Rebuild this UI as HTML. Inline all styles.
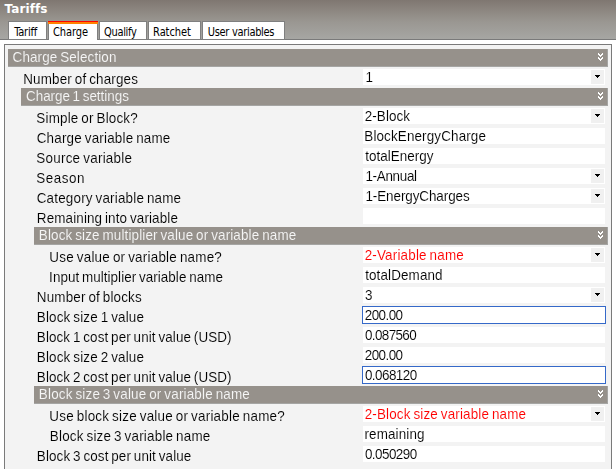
<!DOCTYPE html>
<html><head><meta charset="utf-8"><title>Tariffs</title>
<style>
html,body{margin:0;padding:0}
body{width:616px;height:469px;overflow:hidden;background:#fff;position:relative;font-family:"Liberation Sans",sans-serif;font-size:13px;color:#000}
#bg{position:absolute;left:0;top:0;width:616px;height:469px;display:block}
#title{position:absolute;left:4.5px;top:2px;font-family:"DejaVu Sans",sans-serif;font-weight:bold;font-size:12px;color:#fff;line-height:15px;letter-spacing:0.1px}
#tx{position:absolute;left:0;top:0;width:616px;height:469px;display:block;will-change:transform}
#tt{position:absolute;left:0;top:0;width:616px;height:44px;display:block}
text{white-space:pre}
.tb{font-family:"DejaVu Sans Condensed","Liberation Sans",sans-serif;font-size:11px;fill:#000}
.ht,.lb,.vl{font-family:"Liberation Sans",sans-serif;font-size:14px;stroke-width:0.1px}
.ht{fill:#f6f6f6;stroke:#96918b}
.vl{fill:#000;stroke:#fff}
.lb{fill:#000;stroke:#f3f3f3}
.red{fill:#f00}
</style></head><body>
<svg id="bg" width="616" height="469" viewBox="0 0 616 469">
<defs><linearGradient id="g" x1="0" y1="0" x2="0" y2="1"><stop offset="0" stop-color="#7f7771"/><stop offset="0.25" stop-color="#8c8680"/><stop offset="0.55" stop-color="#9a9792"/><stop offset="1" stop-color="#a7a7a4"/></linearGradient></defs>
<rect x="0" y="0" width="616" height="40" fill="url(#g)"/>
<rect x="0" y="39" width="616" height="1" fill="#7a7a7a"/>
<rect x="8" y="21" width="39" height="19" fill="#7f7f7f"/>
<rect x="9" y="22" width="37" height="17" fill="#fff"/>
<rect x="48" y="21" width="50" height="19" fill="#7f7f7f"/>
<rect x="49" y="21" width="48" height="21" fill="#fff"/>
<rect x="48" y="22" width="50" height="2" fill="#ff8200"/>
<rect x="48" y="21" width="50" height="1" fill="#fb0500"/>
<rect x="99" y="21" width="48" height="19" fill="#7f7f7f"/>
<rect x="100" y="22" width="46" height="17" fill="#fff"/>
<rect x="148" y="21" width="53" height="19" fill="#7f7f7f"/>
<rect x="149" y="22" width="51" height="17" fill="#fff"/>
<rect x="202" y="21" width="83" height="19" fill="#7f7f7f"/>
<rect x="203" y="22" width="81" height="17" fill="#fff"/>
<rect x="4" y="44" width="608" height="440" fill="#7a7a7a"/>
<rect x="5" y="45" width="606" height="440" fill="#f3f3f3"/>
<rect x="8" y="49" width="600" height="18" fill="#a5a5a3"/>
<rect x="8" y="49" width="599" height="17" fill="#96918b"/>
<path d="M598 53h1v1h1v1h1v-1h1v-1h1v2h-1v1h-1v1h-1v-1h-1v-1h-1zM598 57h1v1h1v1h1v-1h1v-1h1v2h-1v1h-1v1h-1v-1h-1v-1h-1z" fill="#fff"/>
<rect x="363" y="69" width="242" height="16" fill="#fff"/>
<rect x="591" y="70" width="13" height="14" fill="#f0f0f0"/>
<path d="M595 75h5v1h-1v1h-1v1h-1v-1h-1v-1h-1z" fill="#000"/>
<rect x="21" y="88" width="587" height="18" fill="#a5a5a3"/>
<rect x="21" y="88" width="586" height="17" fill="#96918b"/>
<path d="M598 92h1v1h1v1h1v-1h1v-1h1v2h-1v1h-1v1h-1v-1h-1v-1h-1zM598 96h1v1h1v1h1v-1h1v-1h1v2h-1v1h-1v1h-1v-1h-1v-1h-1z" fill="#fff"/>
<rect x="363" y="108" width="242" height="16" fill="#fff"/>
<rect x="591" y="109" width="13" height="14" fill="#f0f0f0"/>
<path d="M595 114h5v1h-1v1h-1v1h-1v-1h-1v-1h-1z" fill="#000"/>
<rect x="363" y="128" width="242" height="16" fill="#fff"/>
<rect x="363" y="148" width="242" height="16" fill="#fff"/>
<rect x="363" y="168" width="242" height="16" fill="#fff"/>
<rect x="591" y="169" width="13" height="14" fill="#f0f0f0"/>
<path d="M595 174h5v1h-1v1h-1v1h-1v-1h-1v-1h-1z" fill="#000"/>
<rect x="363" y="188" width="242" height="16" fill="#fff"/>
<rect x="591" y="189" width="13" height="14" fill="#f0f0f0"/>
<path d="M595 194h5v1h-1v1h-1v1h-1v-1h-1v-1h-1z" fill="#000"/>
<rect x="363" y="208" width="242" height="16" fill="#fff"/>
<rect x="34" y="227" width="574" height="18" fill="#a5a5a3"/>
<rect x="34" y="227" width="573" height="17" fill="#96918b"/>
<path d="M598 231h1v1h1v1h1v-1h1v-1h1v2h-1v1h-1v1h-1v-1h-1v-1h-1zM598 235h1v1h1v1h1v-1h1v-1h1v2h-1v1h-1v1h-1v-1h-1v-1h-1z" fill="#fff"/>
<rect x="363" y="247" width="242" height="16" fill="#fff"/>
<rect x="591" y="248" width="13" height="14" fill="#f0f0f0"/>
<path d="M595 253h5v1h-1v1h-1v1h-1v-1h-1v-1h-1z" fill="#000"/>
<rect x="363" y="267" width="242" height="16" fill="#fff"/>
<rect x="363" y="287" width="242" height="16" fill="#fff"/>
<rect x="591" y="288" width="13" height="14" fill="#f0f0f0"/>
<path d="M595 293h5v1h-1v1h-1v1h-1v-1h-1v-1h-1z" fill="#000"/>
<rect x="362" y="306" width="244" height="18" fill="#3569c9"/>
<rect x="363" y="307" width="242" height="16" fill="#fff"/>
<rect x="363" y="327" width="242" height="16" fill="#fff"/>
<rect x="363" y="347" width="242" height="16" fill="#fff"/>
<rect x="362" y="366" width="244" height="18" fill="#3569c9"/>
<rect x="363" y="367" width="242" height="16" fill="#fff"/>
<rect x="34" y="386" width="574" height="18" fill="#a5a5a3"/>
<rect x="34" y="386" width="573" height="17" fill="#96918b"/>
<path d="M598 390h1v1h1v1h1v-1h1v-1h1v2h-1v1h-1v1h-1v-1h-1v-1h-1zM598 394h1v1h1v1h1v-1h1v-1h1v2h-1v1h-1v1h-1v-1h-1v-1h-1z" fill="#fff"/>
<rect x="363" y="406" width="242" height="16" fill="#fff"/>
<rect x="591" y="407" width="13" height="14" fill="#f0f0f0"/>
<path d="M595 412h5v1h-1v1h-1v1h-1v-1h-1v-1h-1z" fill="#000"/>
<rect x="363" y="426" width="242" height="16" fill="#fff"/>
<rect x="363" y="446" width="242" height="16" fill="#fff"/>
</svg>
<div id="title">Tariffs</div>
<svg id="tt" width="616" height="44" viewBox="0 0 616 44">
<text class="tb" transform="translate(14.27,36) scale(1,1.08)" letter-spacing="-0.234">Tariff</text>
<text class="tb" transform="translate(52.89,36) scale(1,1.08)" letter-spacing="-0.078">Charge</text>
<text class="tb" transform="translate(104.05,36) scale(1,1.08)" letter-spacing="-0.327">Qualify</text>
<text class="tb" transform="translate(153.10,36) scale(1,1.08)" letter-spacing="-0.093">Ratchet</text>
<text class="tb" transform="translate(207.82,36) scale(1,1.08)" letter-spacing="-0.313">User variables</text>
</svg>
<svg id="tx" width="616" height="469" viewBox="0 0 616 469">
<text class="ht" transform="translate(12.57,62) scale(0.96,1)" word-spacing="-1.1" letter-spacing="0.126">Charge Selection</text>
<text class="lb" transform="translate(23.27,84) scale(0.96,1)" word-spacing="-1.1" letter-spacing="0.158">Number of charges</text>
<text class="vl" transform="translate(365.40,82) scale(0.96,1)" word-spacing="-1.1" letter-spacing="0.200">1</text>
<text class="ht" transform="translate(26.00,101) scale(0.96,1)" word-spacing="-1.1" letter-spacing="-0.020">Charge 1 settings</text>
<text class="lb" transform="translate(36.32,123) scale(0.96,1)" word-spacing="-1.1" letter-spacing="0.187">Simple or Block?</text>
<text class="vl" transform="translate(364.70,121) scale(0.96,1)" word-spacing="-1.1" letter-spacing="0.100">2-Block</text>
<text class="lb" transform="translate(36.72,143) scale(0.96,1)" word-spacing="-1.1" letter-spacing="0.193">Charge variable name</text>
<text class="vl" transform="translate(364.29,141) scale(0.96,1)" word-spacing="-1.1" letter-spacing="0.139">BlockEnergyCharge</text>
<text class="lb" transform="translate(36.32,163) scale(0.96,1)" word-spacing="-1.1" letter-spacing="0.251">Source variable</text>
<text class="vl" transform="translate(365.15,161) scale(0.96,1)" word-spacing="-1.1" letter-spacing="0.025">totalEnergy</text>
<text class="lb" transform="translate(36.32,183) scale(0.96,1)" word-spacing="-1.1" letter-spacing="0.529">Season</text>
<text class="vl" transform="translate(365.40,181) scale(0.96,1)" word-spacing="-1.1" letter-spacing="-0.316">1-Annual</text>
<text class="lb" transform="translate(36.72,203) scale(0.96,1)" word-spacing="-1.1" letter-spacing="0.190">Category variable name</text>
<text class="vl" transform="translate(365.40,201) scale(0.96,1)" word-spacing="-1.1" letter-spacing="-0.077">1-EnergyCharges</text>
<text class="lb" transform="translate(36.82,223) scale(0.96,1)" word-spacing="-1.1" letter-spacing="0.132">Remaining into variable</text>
<text class="ht" transform="translate(38.86,240) scale(0.96,1)" word-spacing="-1.1" letter-spacing="0.146">Block size multiplier value or variable name</text>
<text class="lb" transform="translate(49.34,262) scale(0.96,1)" word-spacing="-1.1" letter-spacing="0.228">Use value or variable name?</text>
<text class="vl red" transform="translate(364.66,260) scale(0.96,1)" word-spacing="-1.1" letter-spacing="0.189">2-Variable name</text>
<text class="lb" transform="translate(49.12,282) scale(0.96,1)" word-spacing="-1.1" letter-spacing="0.052">Input multiplier variable name</text>
<text class="vl" transform="translate(365.15,280) scale(0.96,1)" word-spacing="-1.1" letter-spacing="0.131">totalDemand</text>
<text class="lb" transform="translate(36.82,302) scale(0.96,1)" word-spacing="-1.1" letter-spacing="0.167">Number of blocks</text>
<text class="vl" transform="translate(364.88,300) scale(0.96,1)" word-spacing="-1.1" letter-spacing="0.200">3</text>
<text class="lb" transform="translate(36.82,322) scale(0.96,1)" word-spacing="-1.1" letter-spacing="0.169">Block size 1 value</text>
<text class="vl" transform="translate(364.70,320) scale(0.96,1)" word-spacing="-1.1" letter-spacing="-0.564">200.00</text>
<text class="lb" transform="translate(36.82,342) scale(0.96,1)" word-spacing="-1.1" letter-spacing="0.103">Block 1 cost per unit value (USD)</text>
<text class="vl" transform="translate(364.91,340) scale(0.96,1)" word-spacing="-1.1" letter-spacing="-0.631">0.087560</text>
<text class="lb" transform="translate(36.82,362) scale(0.96,1)" word-spacing="-1.1" letter-spacing="0.169">Block size 2 value</text>
<text class="vl" transform="translate(364.70,360) scale(0.96,1)" word-spacing="-1.1" letter-spacing="-0.564">200.00</text>
<text class="lb" transform="translate(36.82,382) scale(0.96,1)" word-spacing="-1.1" letter-spacing="0.103">Block 2 cost per unit value (USD)</text>
<text class="vl" transform="translate(364.91,380) scale(0.96,1)" word-spacing="-1.1" letter-spacing="-0.562">0.068120</text>
<text class="ht" transform="translate(38.86,399) scale(0.96,1)" word-spacing="-1.1" letter-spacing="0.181">Block size 3 value or variable name</text>
<text class="lb" transform="translate(49.34,421) scale(0.96,1)" word-spacing="-1.1" letter-spacing="0.224">Use block size value or variable name?</text>
<text class="vl red" transform="translate(364.66,419) scale(0.96,1)" word-spacing="-1.1" letter-spacing="0.166">2-Block size variable name</text>
<text class="lb" transform="translate(49.82,441) scale(0.96,1)" word-spacing="-1.1" letter-spacing="0.204">Block size 3 variable name</text>
<text class="vl" transform="translate(364.47,439) scale(0.96,1)" word-spacing="-1.1" letter-spacing="0.135">remaining</text>
<text class="lb" transform="translate(36.82,461) scale(0.96,1)" word-spacing="-1.1" letter-spacing="0.117">Block 3 cost per unit value</text>
<text class="vl" transform="translate(364.91,459) scale(0.96,1)" word-spacing="-1.1" letter-spacing="-0.562">0.050290</text>
</svg>
</body></html>
